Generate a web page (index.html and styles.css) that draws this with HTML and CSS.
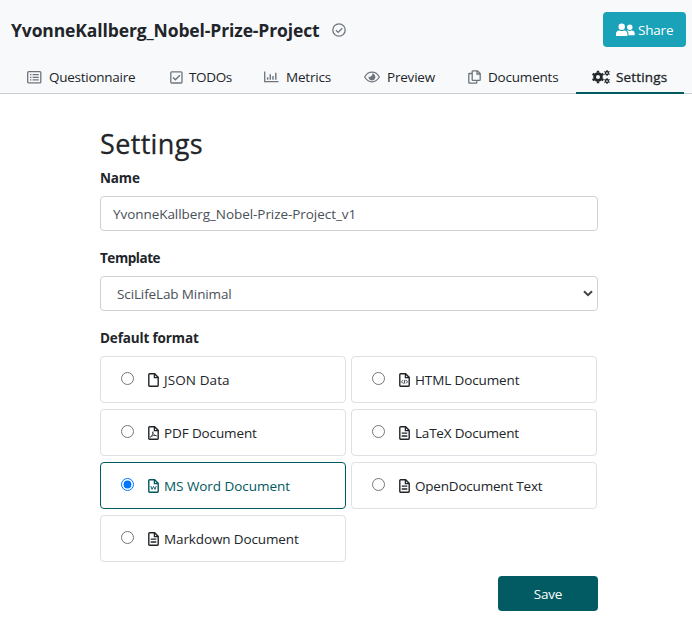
FILE: index.html
```html
<!DOCTYPE html>
<html lang="en">
<head>
<meta charset="utf-8">
<title>Settings</title>
<link rel="stylesheet" href="styles.css">
</head>
<body>
<svg class="symbols" aria-hidden="true">
  <symbol id="file" viewBox="0 0 11 14"><path d="M1.6.8h5l3.6 3.6v8.1a.7.7 0 0 1-.7.7H1.5a.7.7 0 0 1-.7-.7v-11a.7.7 0 0 1 .8-.7z" fill="none" stroke="currentColor" stroke-width="1.4"/><path d="M6.4.8v3.8h3.8" fill="none" stroke="currentColor" stroke-width="1.3"/></symbol>
</svg>
<header class="header">
  <div class="title-row">
    <h1 class="title">YvonneKallberg_Nobel-Prize-Project</h1>
    <svg class="saved" viewBox="0 0 14 14"><circle cx="7" cy="7" r="6.2"/><path d="M4 7.2l2.2 2.2L10.2 5.2"/></svg>
    <button class="share"><svg width="19" height="14" viewBox="0 0 19 14" fill="currentColor"><circle cx="5.7" cy="3.7" r="3.2"/><path d="M0 13v-2.2c0-2 1.3-3.3 3.2-3.3 1.7.7 3.3.7 5 0 1.9 0 3.2 1.3 3.2 3.3V13z"/><circle cx="13.8" cy="4.3" r="2.7"/><path d="M10.8 7.8c.3-.2.7-.3 1.1-.3 1.3.5 2.5.5 3.8 0 1.9 0 3 1.3 3 2.9v1.8h-6.2v-1.5c0-1.1-.6-2.2-1.7-2.9z"/></svg><span>Share</span></button>
  </div>
  <nav class="tabs">
    <a class="tab tab-questionnaire"><svg width="15" height="13" viewBox="0 0 15 13" fill="none" stroke="currentColor"><rect x=".7" y=".7" width="13.1" height="11.2" rx="1" stroke-width="1.3"/><path d="M3 3.7h1.4M3 6.3h1.4M3 8.9h1.4M5.6 3.7h6.2M5.6 6.3h6.2M5.6 8.9h6.2" stroke-width="1.3"/></svg><span>Questionnaire</span></a>
    <a class="tab tab-todos"><svg width="13" height="13" viewBox="0 0 13 13" fill="none" stroke="currentColor" stroke-width="1.3"><rect x=".8" y=".8" width="11.2" height="11.2" rx="1"/><path d="M3 6.5l2.3 2.3 4.6-4.6" stroke-width="1.5"/></svg><span>TODOs</span></a>
    <a class="tab tab-metrics"><svg width="15" height="12" viewBox="0 0 15 12" fill="none" stroke="currentColor"><path d="M.7.5v10.1H14.5" stroke-width="1.3"/><path d="M3.6 6.2v2.6M6.3 3.2v5.6M9 5v3.8M11.8 1.8v7" stroke-width="1.4"/></svg><span>Metrics</span></a>
    <a class="tab tab-preview"><svg width="16" height="12" viewBox="0 0 16 12" fill="none" stroke="currentColor"><path d="M.7 6C2.3 3 4.9 1.2 8 1.2S13.7 3 15.3 6C13.7 9 11.1 10.8 8 10.8S2.3 9 .7 6z" stroke-width="1.2"/><path d="M8 2.6A3.4 3.4 0 1 1 4.7 5.2a1.6 1.6 0 0 0 2.5-.2A1.6 1.6 0 0 0 8 2.6z" fill="currentColor" stroke="none"/></svg><span>Preview</span></a>
    <a class="tab tab-documents"><svg width="13" height="14" viewBox="0 0 13 14" fill="none" stroke="currentColor" stroke-width="1.3"><path d="M4.8.8h4.7l2.7 2.7v6.3a.6.6 0 0 1-.6.6H4.8a.6.6 0 0 1-.6-.6V1.4a.6.6 0 0 1 .6-.6zM9 .8V4h3.2M4 3.5H1.4a.6.6 0 0 0-.6.6v8.5c0 .4.2.6.6.6h6.8c.4 0 .6-.2.6-.6v-2"/></svg><span>Documents</span></a>
    <a class="tab tab-settings active"><svg width="18" height="14" viewBox="0 0 18 14" fill="none" stroke="currentColor"><circle cx="6" cy="7" r="3.4" stroke-width="2.8"/><path d="M6 .8v1.8M6 11.4v1.8M.6 3.9l1.6.9M9.8 9.2l1.6.9M.6 10.1l1.6-.9M9.8 4.8l1.6-.9" stroke-width="2.4"/><circle cx="15" cy="3" r="1.5" stroke-width="1.3"/><circle cx="15" cy="11" r="1.5" stroke-width="1.3"/><path d="M15 0v1M15 5v1M12.4 1.5l.9.5M16.7 4l.9.5M12.4 4.5l.9-.5M16.7 2l.9-.5M15 8v1M15 13v1M12.4 9.5l.9.5M16.7 12l.9.5M12.4 12.5l.9-.5M16.7 10l.9-.5" stroke-width="1.1"/></svg><span>Settings</span></a>
  </nav>
</header>
<main class="content">
  <h2 class="heading">Settings</h2>
  <label class="label label-name" for="name">Name</label>
  <input class="control" id="name" value="YvonneKallberg_Nobel-Prize-Project_v1">
  <label class="label label-template" for="template">Template</label>
  <div class="control select" id="template"><span>SciLifeLab Minimal</span><svg width="10" height="7" viewBox="0 0 10 7" fill="none" stroke="#444" stroke-width="2"><path d="M1 1.2l4 4 4-4"/></svg></div>
  <div class="label label-format">Default format</div>
  <div class="formats">
    <label class="format json"><input type="radio" name="format"><svg class="icon"><use href="#file"/></svg><span>JSON Data</span></label>
    <label class="format html"><input type="radio" name="format"><svg class="icon" viewBox="0 0 11 14"><use href="#file"/><path d="M4 7.2L2.5 8.8 4 10.4M7 7.2l1.5 1.6L7 10.4M6 6.8l-1 4" fill="none" stroke="currentColor" stroke-width=".9"/></svg><span>HTML Document</span></label>
    <label class="format pdf"><input type="radio" name="format"><svg class="icon" viewBox="0 0 11 14"><use href="#file"/><path d="M2.3 11.2C4 10.2 5 8 5 5.7c-.8 1.2.8 3.8 3.6 4.1C6.5 8.8 4 9.6 2.3 11.2z" fill="none" stroke="currentColor" stroke-width=".8"/></svg><span>PDF Document</span></label>
    <label class="format latex"><input type="radio" name="format"><svg class="icon" viewBox="0 0 11 14"><use href="#file"/><path d="M2.7 7.2h5.6M2.7 10h5.6" stroke="currentColor" stroke-width="1.3"/></svg><span>LaTeX Document</span></label>
    <label class="format word selected"><input type="radio" name="format" checked><svg class="icon" viewBox="0 0 11 14"><use href="#file"/><path d="M2.8 7l1.2 3.4L5.5 7.4 7 10.4 8.2 7" fill="none" stroke="currentColor" stroke-width=".9"/></svg><span>MS Word Document</span></label>
    <label class="format odt"><input type="radio" name="format"><svg class="icon" viewBox="0 0 11 14"><use href="#file"/><path d="M2.7 7.2h5.6M2.7 10h5.6" stroke="currentColor" stroke-width="1.3"/></svg><span>OpenDocument Text</span></label>
    <label class="format markdown"><input type="radio" name="format"><svg class="icon" viewBox="0 0 11 14"><use href="#file"/><path d="M2.7 7.2h5.6M2.7 10h5.6" stroke="currentColor" stroke-width="1.3"/></svg><span>Markdown Document</span></label>
  </div>
  <button class="save">Save</button>
</main>
</body>
</html>
```
FILE: styles.css
```css
* { box-sizing: border-box; }
body { margin: 0; background: #fff; color: #212529; font: 13.5px/21px "Open Sans", "Noto Sans", sans-serif; letter-spacing: -.2px; }
svg { display: block; flex: none; }
button { font: inherit; letter-spacing: inherit; border: 0; padding: 0; color: #fff; border-radius: 4px; }
span { white-space: nowrap; }
.symbols { width: 0; height: 0; position: absolute; }
.header { height: 94px; background: #f8f9fb; border-bottom: 1px solid #cbced1; }
.title-row { display: flex; align-items: center; height: 59px; padding: 0 6px 0 11px; }
.title { width: 309px; margin: 0; font-size: 17.5px; line-height: 24px; font-weight: 700; letter-spacing: -.12px; white-space: nowrap; }
.saved { width: 14px; height: 14px; margin-left: 12px; fill: none; stroke: #6c757d; stroke-width: 1.3; }
.share { display: flex; align-items: center; gap: 3px; width: 83px; height: 35px; margin-left: auto; padding: 1px 0 0 13px; background: #19a2b8; }
.tabs { display: flex; height: 35px; padding: 1px 0 0 11px; }
.tab { display: flex; align-items: center; height: 34px; padding-left: 16px; }
.tab svg { color: #6c757d; }
.tab span { margin-left: 7px; }
.tab-questionnaire { width: 143px; letter-spacing: -.27px; }
.tab-todos { width: 94px; letter-spacing: -.35px; }
.tab-todos span { margin-left: 6px; }
.tab-metrics { width: 100px; }
.tab-preview { width: 104px; }
.tab-documents { width: 124px; }
.tab-settings { width: 108px; border-bottom: 2px solid #005a60; padding-top: 2px; letter-spacing: .15px; -webkit-text-stroke: .3px; }
.tab-settings span { margin-left: 6px; }
.tab-settings svg { color: #212529; }
.content { display: flex; flex-direction: column; width: 498px; margin-left: 100px; padding-top: 33px; }
.heading { margin: 0 0 7px; font-size: 27px; line-height: 34px; font-weight: 500; letter-spacing: .35px; -webkit-text-stroke: .3px; }
.label { height: 28px; font-weight: 700; letter-spacing: -.15px; }
.label-template, .label-format { margin-top: 17px; }
.label-template { letter-spacing: -.45px; }
.control { width: 498px; height: 35px; border: 1px solid #ced0d3; border-radius: 4px; padding: 0 12px; background: #fff; color: #495057; font: inherit; letter-spacing: -.06px; }
.select { display: flex; align-items: center; justify-content: space-between; padding: 0 4px 0 16px; letter-spacing: -.12px; }
.select span { padding-top: 2px; }
.formats { display: grid; grid-template-columns: 246px 246px; grid-auto-rows: 47px; gap: 6px 5px; }
.format { display: flex; align-items: center; border: 1px solid #dfe0e5; border-radius: 4px; padding: 1px 0 0 20px; }
.format input { width: 13px; height: 13px; margin: -4px 14.4px 0 0; }
.icon { width: 11px; height: 14px; }
.format span { margin-left: 4.6px; padding-top: 1px; }
.json { letter-spacing: .1px; }
.html, .pdf, .markdown { letter-spacing: -.12px; }
.selected { border-color: #005a60; color: #005a60; letter-spacing: -.05px; }
.save { align-self: flex-end; width: 100px; height: 35px; margin-top: 14px; padding-top: 2px; background: #025b62; }
```
